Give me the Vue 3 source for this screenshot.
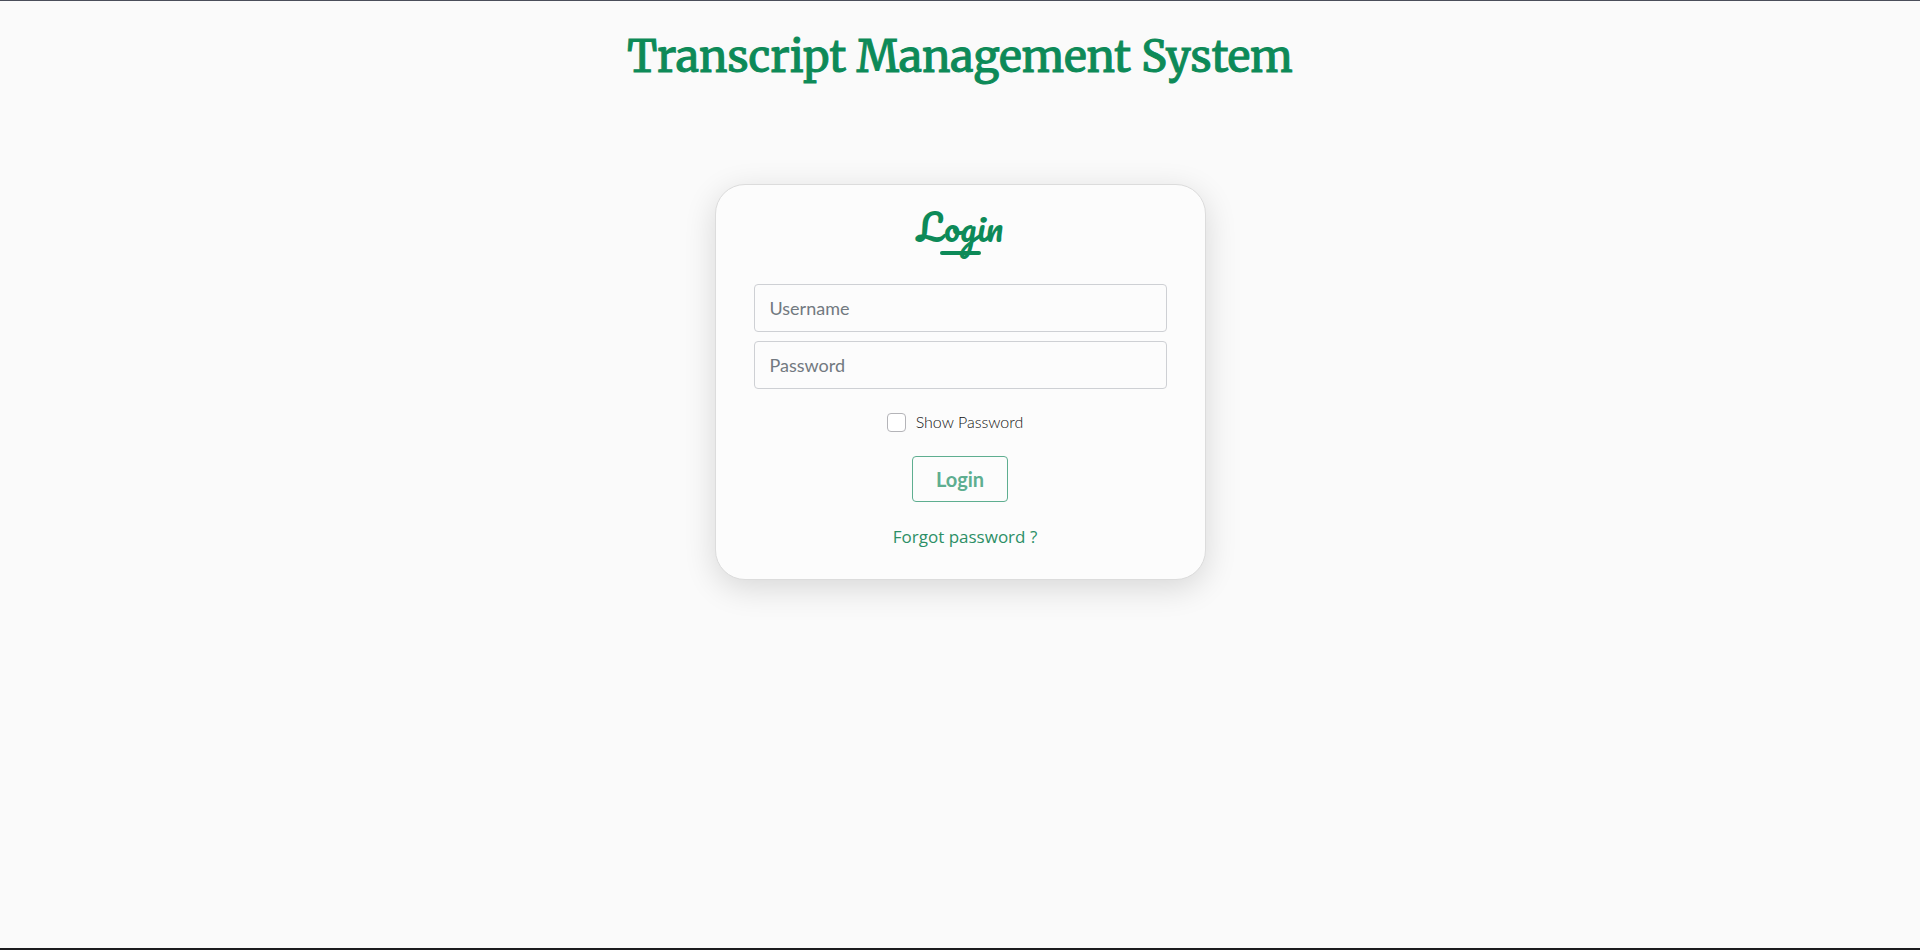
<script setup>
import { ref } from 'vue'

const username = ref('')
const password = ref('')
const showPassword = ref(false)
</script>

<template>
  <div class="page">
    <h1 class="title">Transcript Management System</h1>
    <main class="card">
      <h2 class="heading">Login</h2>
      <form class="form" @submit.prevent>
        <input v-model="username" class="field" type="text" placeholder="Username" aria-label="Username" />
        <input
          v-model="password"
          class="field"
          :type="showPassword ? 'text' : 'password'"
          placeholder="Password"
          aria-label="Password"
        />
        <div class="show">
          <input id="show-password" v-model="showPassword" class="check" type="checkbox" />
          <label for="show-password">Show Password</label>
        </div>
        <button class="submit" type="submit">Login</button>
      </form>
      <a class="forgot" href="#">Forgot password ?</a>
    </main>
  </div>
</template>

<style>
body {
  background: #fafafa;
}
</style>

<style scoped>
.page {
  box-sizing: border-box;
  min-height: 100vh;
  padding: 24px 16px;
  display: flex;
  flex-direction: column;
  align-items: center;
  border-top: 1px solid #4a4e5a;
  border-bottom: 2px solid #1c1c1e;
  background: #fafafa;
  font-family: Lato, "Liberation Sans", sans-serif;
}

.title {
  margin: 0;
  color: #0d8a58;
  font: 400 43px/64px Merriweather, "DejaVu Serif Condensed", "Liberation Serif", serif;
  -webkit-text-stroke: 1px #0d8a58;
  text-align: center;
}

.card {
  box-sizing: border-box;
  width: 100%;
  max-width: 491px;
  margin-top: 95px;
  padding: 16px 38px 30px;
  display: flex;
  flex-direction: column;
  align-items: center;
  border: 1px solid #dcdcdc;
  border-radius: 30px;
  background: #fcfcfc;
  box-shadow: 0 8px 32px rgba(0, 0, 0, 0.14);
}

.heading {
  position: relative;
  margin: 0 0 31px;
  color: #0d8a58;
  font: 400 36px/52px Pacifico, Lato, cursive;
}

.heading::after {
  content: "";
  position: absolute;
  left: 50%;
  bottom: -2px;
  width: 41px;
  height: 4px;
  margin-left: -20px;
  border-radius: 2px;
  background: #0d8a58;
}

.form {
  width: 100%;
  display: flex;
  flex-direction: column;
  align-items: center;
}

.field {
  box-sizing: border-box;
  width: 100%;
  height: 48px;
  margin-bottom: 9px;
  padding: 0 15px;
  border: 1px solid #ced0d4;
  border-radius: 4px;
  background: #fcfcfc;
  color: #212529;
  font: 18px/24px Lato, sans-serif;
}

.field::placeholder {
  color: #727980;
  opacity: 1;
}

.show {
  margin: 14px 10px 24px 0;
  display: flex;
  align-items: center;
  gap: 10px;
  color: #111;
  font-size: 16px;
  font-weight: 300;
  line-height: 20px;
}

.check {
  appearance: none;
  width: 19px;
  height: 19px;
  margin: 0;
  border: 1px solid #b4b4b8;
  border-radius: 4px;
  background: #fff;
}

.check:checked {
  border-color: #0d8a58;
  background: #0d8a58;
}

.submit {
  height: 46px;
  padding: 0 23px;
  border: 1px solid #5eae90;
  border-radius: 4px;
  background: transparent;
  color: #5eae90;
  font: bold 20px/24px Lato, sans-serif;
}

.forgot {
  margin: 23px 0 0 10px;
  color: #2c8f66;
  font: 17px/24px "Open Sans", "Noto Sans", sans-serif;
  text-decoration: none;
}
</style>
